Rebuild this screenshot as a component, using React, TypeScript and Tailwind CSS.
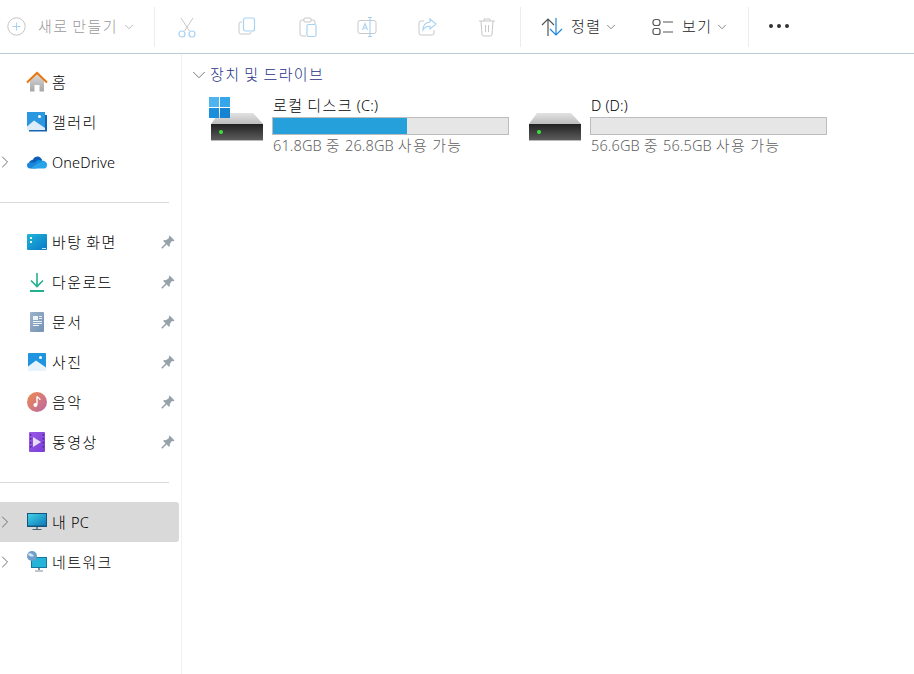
import { ChevronDown, ChevronRight } from "lucide-react";
import type { ReactNode } from "react";

const font = "font-['Noto_Sans','Noto_Sans_CJK_KR',sans-serif]";

// hangul runs are wider than latin ones in the picture
const Txt = ({ text }: { text: string }) => (
  <>
    {text.split(/([\uac00-\ud7a3]+)/).map((part, i) =>
      i % 2 === 1 ? (
        <span key={i} className="text-[15px] tracking-[1.4px] font-light">{part}</span>
      ) : (
        <span key={i} className="text-[14.5px] tracking-[0.15px] font-light">{part}</span>
      ),
    )}
  </>
);

const Sep = () => <div className="w-px h-10 bg-[#ececec] shrink-0" />;

const ToolIcon = ({ children }: { children: ReactNode }) => (
  <div className="w-[60px] flex justify-center shrink-0">
    <svg width="24" height="24" viewBox="0 0 24 24" fill="none">{children}</svg>
  </div>
);

const Pin = () => (
  <svg width="16" height="16" viewBox="0 0 16 16" className="shrink-0">
    <path d="M9.6 1.5 14.5 6.4 13.3 7.2 11.9 7 9.7 10.1 9.9 12 8.9 12.8 3.2 7.1 4 6.1 5.9 6.3 9 4.1 8.8 2.7Z" fill="#97a1a9" />
    <path d="M6.2 9.8 1.8 14.2" stroke="#97a1a9" strokeWidth="1.6" />
  </svg>
);

const HomeIcon = () => (
  <svg width="22" height="22" viewBox="0 0 22 22">
    <defs>
      <linearGradient id="hm" x1="0" y1="0" x2="0" y2="1">
        <stop offset="0" stopColor="#d8d8d8" />
        <stop offset="1" stopColor="#a6a6a6" />
      </linearGradient>
    </defs>
    <path d="M4 10 11 3.5 18 10V20.5H13.5V14H8.5V20.5H4Z" fill="url(#hm)" />
    <path d="M1 11.5 11 2 21 11.5" fill="none" stroke="#e8740f" strokeWidth="2" />
  </svg>
);

const GalleryIcon = () => (
  <svg width="22" height="22" viewBox="0 0 22 22">
    <path d="M3 4H21V20.5H3Z" fill="#1464b4" />
    <rect x="1" y="1" width="18" height="18" fill="#2a97e0" />
    <path d="M1 19V15.5L8 9.5 19 17V19Z" fill="#dcecf8" />
    <circle cx="13.5" cy="5.5" r="1.5" fill="#fff" />
  </svg>
);

const CloudIcon = () => (
  <svg width="22" height="22" viewBox="0 0 22 22">
    <path d="M3 13C3 10 5 9 6.5 9 8 6 10.5 5 12.5 5.5 14.5 6 16 8 16.2 9.5L9 14 5 16 3.5 15Z" fill="#0f5fb8" />
    <path d="M9 11.5C11 9 14 8.5 16.2 9.8 19 9.8 21 12 21 13.5L15 14.5Z" fill="#1490df" />
    <path d="M1 14C1 12.5 2 11.5 3.5 11.5L9 11.5 15 15.5 10 17.5H4C2 17.5 1 16 1 14Z" fill="#1c86d8" />
    <path d="M9 14 16.2 10.5C19 10.5 21 12 21 14.5 21 16 20 17.5 18 17.5H5Z" fill="#29a4ec" />
  </svg>
);

const DesktopIcon = () => (
  <svg width="20" height="16" viewBox="0 0 20 16">
    <defs>
      <linearGradient id="dk" x1="0" y1="0" x2="1" y2="1">
        <stop offset="0" stopColor="#1fb6d8" />
        <stop offset="1" stopColor="#0a78c8" />
      </linearGradient>
    </defs>
    <rect width="20" height="16" rx="1" fill="url(#dk)" />
    <rect x="3" y="3" width="2" height="2" fill="#e4f6fb" />
    <rect x="3" y="7" width="2" height="2" fill="#e4f6fb" />
    <rect x="15" y="14" width="4" height="1" fill="#cfeaf5" />
  </svg>
);

const DownloadIcon = () => (
  <svg width="16" height="20" viewBox="0 0 16 20" fill="none" stroke="#23b08d" strokeWidth="1.6">
    <path d="M8 1V14M2 8.5 8 14.5 14 8.5" />
    <path d="M1 19H15" strokeWidth="2" />
  </svg>
);

const DocIcon = () => (
  <svg width="14" height="20" viewBox="0 0 14 20">
    <defs>
      <linearGradient id="dc" x1="0" y1="0" x2="1" y2="1">
        <stop offset="0" stopColor="#9cb3cc" />
        <stop offset="1" stopColor="#7392b3" />
      </linearGradient>
    </defs>
    <rect width="14" height="20" rx="1" fill="url(#dc)" />
    <path d="M3 4H8V8H3ZM9 4H12V5H9ZM9 6H12V7H9ZM3 9H12V10H3ZM3 11H12V12H3ZM3 13H9V14H3Z" fill="#eef3f8" />
  </svg>
);

const PhotoIcon = () => (
  <svg width="18" height="18" viewBox="0 0 18 18">
    <rect width="18" height="18" rx="1" fill="#1f94e0" />
    <path d="M0 18V13.5L8 7.5 18 14.5V18Z" fill="#e8f3fb" />
    <circle cx="12.5" cy="4.5" r="1.5" fill="#fff" />
  </svg>
);

const MusicIcon = () => (
  <svg width="20" height="20" viewBox="0 0 20 20">
    <defs>
      <linearGradient id="ms" x1="0" y1="0" x2="1" y2="1">
        <stop offset="0" stopColor="#f08a4b" />
        <stop offset="1" stopColor="#b868a8" />
      </linearGradient>
    </defs>
    <circle cx="10" cy="10" r="10" fill="url(#ms)" />
    <path d="M10 4.5V12.5" stroke="#fff" strokeWidth="1.4" />
    <circle cx="8.4" cy="13" r="2" fill="#fff" />
    <path d="M10 4.5C11 6 13 6 13 8" stroke="#fff" strokeWidth="1.3" fill="none" />
  </svg>
);

const VideoIcon = () => (
  <svg width="16" height="20" viewBox="0 0 16 20">
    <defs>
      <linearGradient id="vd" x1="0" y1="0" x2="1" y2="1">
        <stop offset="0" stopColor="#9a5ae6" />
        <stop offset="1" stopColor="#7a3ed8" />
      </linearGradient>
    </defs>
    <rect width="16" height="20" rx="1" fill="url(#vd)" />
    <path d="M4 5 12 10 4 15Z" fill="#e8defa" />
    <path d="M1 2H2.4V3.6H1ZM1 6H2.4V7.6H1ZM1 10H2.4V11.6H1ZM1 14H2.4V15.6H1ZM13.6 2H15V3.6H13.6ZM13.6 6H15V7.6H13.6ZM13.6 10H15V11.6H13.6ZM13.6 14H15V15.6H13.6Z" fill="#4a2496" />
  </svg>
);

const PcIcon = () => (
  <svg width="20" height="18" viewBox="0 0 20 18">
    <defs>
      <linearGradient id="pc" x1="0" y1="0" x2="1" y2="1">
        <stop offset="0" stopColor="#3fd2e6" />
        <stop offset="1" stopColor="#0f78b8" />
      </linearGradient>
    </defs>
    <rect width="20" height="14" fill="#12567e" />
    <rect x="1" y="1" width="18" height="11.5" fill="url(#pc)" />
    <path d="M9 14H11V16H9Z" fill="#6d8592" />
    <path d="M5.5 16H14.5V17H5.5Z" fill="#4a6372" />
  </svg>
);

const NetIcon = () => (
  <svg width="22" height="22" viewBox="0 0 22 22">
    <rect x="5" y="6" width="16" height="11" fill="#13789f" />
    <rect x="6" y="7" width="14" height="9" fill="#25b4d8" />
    <path d="M12 17H14V19H12ZM9 19.5H17V20.5H9Z" fill="#7d929e" />
    <circle cx="6" cy="5" r="5" fill="#6f9ec8" />
    <path d="M2 3C4 1 7 3 8 5 6 6 3 6 2 3Z" fill="#d4e4f2" />
  </svg>
);

const Row = ({
  icon,
  label,
  chevron,
  pin,
  active,
}: {
  icon: ReactNode;
  label: string;
  chevron?: boolean;
  pin?: boolean;
  active?: boolean;
}) => (
  <div className={`h-10 w-[179px] flex items-center rounded-r-[3px] ${active ? "bg-[#d9d9d9]" : ""}`}>
    <div className="w-[26px] shrink-0 flex justify-start">
      {chevron && <ChevronRight size={20} strokeWidth={1.2} className="-ml-[5px] text-[#6f6f6f]" />}
    </div>
    <div className="w-[22px] h-[22px] shrink-0 flex items-center justify-center">{icon}</div>
    <span className="ml-[4px] text-black flex-1 whitespace-nowrap"><Txt text={label} /></span>
    {pin && <div className="mr-[3px]"><Pin /></div>}
  </div>
);

const DriveIcon = ({ windows }: { windows?: boolean }) => (
  <div className="relative w-[63px] h-[48px] shrink-0">
    <svg width="52" height="28" viewBox="0 0 52 28" className="absolute left-[2px] top-[16px]">
      <defs>
        <linearGradient id="dt" x1="0" y1="0" x2="0" y2="1">
          <stop offset="0" stopColor="#e2e2e2" />
          <stop offset="1" stopColor="#bdbdbd" />
        </linearGradient>
        <linearGradient id="df" x1="0" y1="0" x2="0" y2="1">
          <stop offset="0" stopColor="#222" />
          <stop offset="1" stopColor="#5c5c5c" />
        </linearGradient>
      </defs>
      <path d="M8 0H42L52 11H0Z" fill="url(#dt)" />
      <rect y="11" width="52" height="16" fill="url(#df)" />
      <rect y="27" width="52" height="1" fill="#b9b9b9" />
      <circle cx="10" cy="19" r="2" fill="#39e53a" />
    </svg>
    {windows && (
      <div className="absolute left-0 top-0 grid grid-cols-2 gap-px w-[21px] h-[21px]">
        <div className="bg-[#4fb4ee]" />
        <div className="bg-[#35a6ea]" />
        <div className="bg-[#1c8fdc]" />
        <div className="bg-[#1583d2]" />
      </div>
    )}
  </div>
);

const Drive = ({
  name,
  free,
  used,
  windows,
}: {
  name: string;
  free: string;
  used: number;
  windows?: boolean;
}) => (
  <div className="flex w-[318px]">
    <DriveIcon windows={windows} />
    <div className="w-[237px] -mt-px">
      <div className="leading-[19px] text-black pl-px whitespace-nowrap"><Txt text={name} /></div>
      <div className="h-[18px] border border-[#bcbcbc] bg-[#e6e6e6] mt-[2px]">
        <div className="h-full bg-[#26a0da]" style={{ width: `${used}%` }} />
      </div>
      <div className="leading-[19px] text-[#5f5f5f] pl-px mt-[1px] whitespace-nowrap"><Txt text={free} /></div>
    </div>
  </div>
);

export default function App() {
  return (
    <div className={`w-[914px] h-[674px] bg-white overflow-hidden flex flex-col ${font}`}>
      <div className="h-[54px] shrink-0 border-b border-[#b9ccd6] flex items-center">
        <div className="w-[154px] flex items-center shrink-0 pl-[7px]">
          <svg width="19" height="19" viewBox="0 0 19 19" fill="none" className="shrink-0">
            <circle cx="9.5" cy="9.5" r="8.7" stroke="#c4c4c4" />
            <path d="M9.5 5.5V13.5M5.5 9.5H13.5" stroke="#a8d2f2" />
          </svg>
          <span className="ml-[12px] -mt-[2px] text-[#9a9a9a] whitespace-nowrap"><Txt text="새로 만들기" /></span>
          <ChevronDown size={14} strokeWidth={1.5} className="ml-[4px] text-[#b0b0b0]" />
        </div>
        <Sep />
        <div className="flex pl-[2px] mr-[3px]">
          <ToolIcon>
            <path d="M6 3 14.5 16M18 3 9.5 16" stroke="#c8c8c8" />
            <circle cx="7" cy="19" r="3" stroke="#a8d2f2" strokeWidth="1.2" />
            <circle cx="17" cy="19" r="3" stroke="#a8d2f2" strokeWidth="1.2" />
          </ToolIcon>
          <ToolIcon>
            <path d="M7 7H6A2 2 0 0 0 4 9V17A2 2 0 0 0 6 19H14A2 2 0 0 0 16 17" stroke="#c8c8c8" />
            <rect x="8.5" y="3" width="11" height="13" rx="2" stroke="#a8d2f2" strokeWidth="1.2" />
          </ToolIcon>
          <ToolIcon>
            <path d="M9 5H7A2 2 0 0 0 5 7V19A2 2 0 0 0 7 21H11" stroke="#c8c8c8" />
            <rect x="9" y="3" width="7" height="4" rx="1" stroke="#c8c8c8" />
            <path d="M16 5H18A2 2 0 0 1 20 7V9" stroke="#c8c8c8" />
            <rect x="12" y="9.5" width="9" height="12" rx="1.5" stroke="#a8d2f2" strokeWidth="1.2" />
          </ToolIcon>
          <ToolIcon>
            <rect x="3" y="5.5" width="18" height="13" rx="2" stroke="#c8c8c8" />
            <path d="M7.5 15 10 8.5 12.5 15M8.5 13H11.5" stroke="#a8d2f2" strokeWidth="1.1" />
            <path d="M15 2.5V21.5M13 2.5H17M13 21.5H17" stroke="#a8d2f2" strokeWidth="1.1" />
          </ToolIcon>
          <ToolIcon>
            <path d="M9 6H6A2 2 0 0 0 4 8V18A2 2 0 0 0 6 20H17A2 2 0 0 0 19 18V15" stroke="#c8c8c8" />
            <path d="M15 4 21 9 15 14V11.2C11.5 11 9.5 12.5 8 15 8 10.5 10.5 7.5 15 7Z" stroke="#a8d2f2" strokeWidth="1.1" />
          </ToolIcon>
          <ToolIcon>
            <path d="M4 6H20M9 6V4H15V6M6 6 7 20A2 2 0 0 0 9 21H15A2 2 0 0 0 17 20L18 6M10.5 10V17M13.5 10V17" stroke="#c8c8c8" />
          </ToolIcon>
        </div>
        <Sep />
        <div className="flex items-center w-[110px] pl-[20px] shrink-0">
          <svg width="22" height="20" viewBox="0 0 22 20" fill="none" strokeWidth="1.2" className="shrink-0">
            <path d="M7 19V2M1 8 7 2 13 8" stroke="#555" />
            <path d="M15 1V18M9 12 15 18 21 12" stroke="#1f86d9" />
          </svg>
          <span className="ml-[8px] -mt-[2px] text-[#1a1a1a]"><Txt text="정렬" /></span>
          <ChevronDown size={14} strokeWidth={1.5} className="ml-[3px] text-[#777]" />
        </div>
        <div className="flex items-center w-[117px] pl-[21px] shrink-0">
          <svg width="22" height="18" viewBox="0 0 22 18" fill="none" stroke="#555" strokeWidth="1.2" className="shrink-0">
            <rect x="1" y="1.5" width="7" height="6" rx="2.5" />
            <rect x="1" y="10.5" width="7" height="6" rx="2" />
            <path d="M11 4H21M11 14H21" />
          </svg>
          <span className="ml-[8px] -mt-[2px] text-[#1a1a1a]"><Txt text="보기" /></span>
          <ChevronDown size={14} strokeWidth={1.5} className="ml-[3px] text-[#777]" />
        </div>
        <Sep />
        <svg width="22" height="6" viewBox="0 0 22 6" className="ml-[19px] -mt-[2px]">
          <circle cx="3" cy="3" r="2" fill="#333" />
          <circle cx="11" cy="3" r="2" fill="#333" />
          <circle cx="19" cy="3" r="2" fill="#333" />
        </svg>
      </div>

      <div className="flex flex-1 min-h-0">
        <div className="w-[182px] shrink-0 border-r border-[#f2f2f2] pt-2">
          <Row icon={<HomeIcon />} label="홈" />
          <Row icon={<GalleryIcon />} label="갤러리" />
          <Row icon={<CloudIcon />} label="OneDrive" chevron />
          <div className="h-px w-[169px] bg-[#d9d9d9] mt-5 mb-[19px]" />
          <Row icon={<DesktopIcon />} label="바탕 화면" pin />
          <Row icon={<DownloadIcon />} label="다운로드" pin />
          <Row icon={<DocIcon />} label="문서" pin />
          <Row icon={<PhotoIcon />} label="사진" pin />
          <Row icon={<MusicIcon />} label="음악" pin />
          <Row icon={<VideoIcon />} label="동영상" pin />
          <div className="h-px w-[169px] bg-[#d9d9d9] mt-5 mb-[19px]" />
          <Row icon={<PcIcon />} label="내 PC" chevron active />
          <Row icon={<NetIcon />} label="네트워크" chevron />
        </div>

        <div className="flex-1 pt-[11px] pl-[9px]">
          <div className="flex items-center h-5">
            <ChevronDown size={22} strokeWidth={1} className="-ml-[3.5px] text-[#6d6d6d]" />
            <span className="ml-[0.5px] -mt-[2px] text-[#1e3287] whitespace-nowrap"><Txt text="장치 및 드라이브" /></span>
          </div>
          <div className="flex pl-[18px] mt-[12px]">
            <Drive name="로컬 디스크 (C:)" free="61.8GB 중 26.8GB 사용 가능" used={57} windows />
            <Drive name="D (D:)" free="56.6GB 중 56.5GB 사용 가능" used={0} />
          </div>
        </div>
      </div>
    </div>
  );
}
